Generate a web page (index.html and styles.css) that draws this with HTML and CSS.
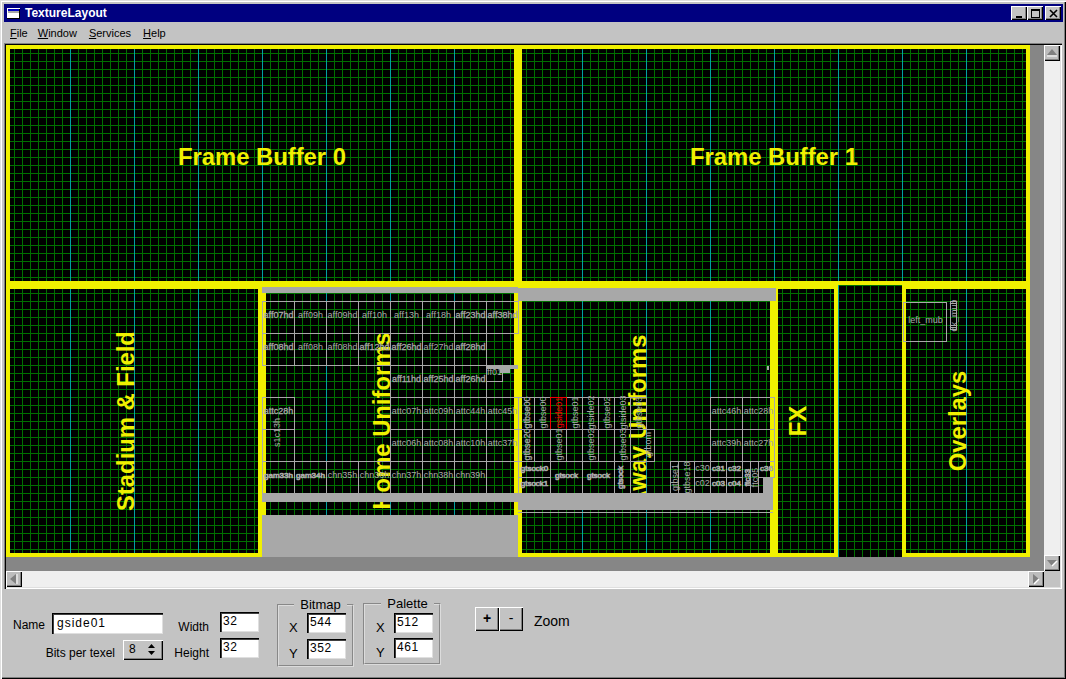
FILE: index.html
```html
<!DOCTYPE html>
<html lang="en">
<head>
    <meta charset="UTF-8">
    <title>TextureLayout</title>
    <link rel="stylesheet" href="styles.css">
</head>
<body>
<div class="window">
    <div class="titlebar">
        <svg class="appicon" width="13" height="11" viewBox="0 0 13 11">
            <rect x="0" y="0" width="13" height="11" fill="#fff"/>
            <rect x="1" y="1" width="11" height="2" fill="#0000c0"/>
            <rect x="1" y="3" width="11" height="2" fill="#a8a8a8"/>
            <rect x="0" y="10" width="13" height="1" fill="#000"/>
            <rect x="12" y="1" width="1" height="10" fill="#000"/>
        </svg>
        <span class="title">TextureLayout</span>
        <div class="winbtns">
            <button class="winbtn"><svg width="9" height="9" viewBox="0 0 9 9"><rect x="1" y="7" width="6" height="2"/></svg></button>
            <button class="winbtn"><svg width="9" height="9" viewBox="0 0 9 9"><path d="M0 0h9v9H0zM1 2v6h7V2z" fill-rule="evenodd"/></svg></button>
            <button class="winbtn winbtn-close"><svg width="9" height="9" viewBox="0 0 9 9"><path d="M1 1l7 7M8 1L1 8" stroke="#000" stroke-width="1.6"/></svg></button>
        </div>
    </div>

    <div class="menubar">
        <span class="menu-file"><u>F</u>ile</span>
        <span><u>W</u>indow</span>
        <span><u>S</u>ervices</span>
        <span><u>H</u>elp</span>
    </div>

    <div class="viewport">
        <div class="canvas">
            <svg class="sheet" width="1024" height="512" viewBox="6 45 1024 512">
                <!-- regions -->
                <rect class="region" x="8" y="47" width="508" height="236"/>
                <rect class="region" x="520" y="47" width="508" height="236"/>
                <rect class="region" x="8" y="287" width="252" height="268"/>
                <rect class="region" x="264" y="287" width="252" height="268"/>
                <rect class="region" x="520" y="287" width="252" height="268"/>
                <rect class="region" x="776" y="287" width="60" height="268"/>
                <rect class="region" x="904" y="287" width="124" height="268"/>

                <text class="region-name" x="262" y="165">Frame Buffer 0</text>
                <text class="region-name" x="774" y="165">Frame Buffer 1</text>
                <text class="region-name" x="134" y="421" transform="rotate(-90 134 421)">Stadium &amp; Field</text>
                <text class="region-name" x="390" y="421" transform="rotate(-90 390 421)">Home Uniforms</text>
                <text class="region-name" x="646" y="421" transform="rotate(-90 646 421)">Away Uniforms</text>
                <text class="region-name" x="806" y="421" transform="rotate(-90 806 421)">FX</text>
                <text class="region-name" x="966" y="421" transform="rotate(-90 966 421)">Overlays</text>

                <!-- used up areas -->
                <rect class="used" x="262" y="287" width="256" height="6"/>
                <rect class="used" x="518" y="288" width="258" height="13"/>
                <rect class="used" x="262" y="493" width="256" height="9"/>
                <rect class="used" x="518" y="493" width="255" height="17"/>
                <rect class="used" x="262" y="515" width="256" height="42"/>
                <rect class="used" x="518" y="512" width="255" height="1"/>
                <rect class="used" x="486" y="365" width="32" height="4"/>
                <rect class="used" x="500" y="369" width="10" height="4"/>
                <rect class="used" x="763" y="477" width="10" height="16"/>
                <rect class="used" x="767" y="366" width="2" height="4"/>

                <g class="textures" transform="translate(.5 .5)">
                    <!-- home: row 301 -->
                    <rect x="262" y="301" width="32" height="32"/><text class="blur" x="278" y="317">aff07hd</text>
                    <rect x="294" y="301" width="32" height="32"/><text x="310" y="317">aff09h</text>
                    <rect x="326" y="301" width="32" height="32"/><text x="342" y="317">aff09hd</text>
                    <rect x="358" y="301" width="32" height="32"/><text x="374" y="317">aff10h</text>
                    <rect x="390" y="301" width="32" height="32"/><text x="406" y="317">aff13h</text>
                    <rect x="422" y="301" width="32" height="32"/><text x="438" y="317">aff18h</text>
                    <rect x="454" y="301" width="32" height="32"/><text class="blur" x="470" y="317">aff23hd</text>
                    <rect x="486" y="301" width="32" height="32"/><text class="blur" x="502" y="317">aff38hd</text>
                    <!-- home: row 333 -->
                    <rect x="262" y="333" width="32" height="32"/><text class="blur" x="278" y="349">aff08hd</text>
                    <rect x="294" y="333" width="32" height="32"/><text x="310" y="349">aff08h</text>
                    <rect x="326" y="333" width="32" height="32"/><text x="342" y="349">aff08hd</text>
                    <rect x="358" y="333" width="32" height="32"/><text class="blur" x="374" y="349">aff12hd</text>
                    <rect x="390" y="333" width="32" height="32"/><text class="blur" x="406" y="349">aff26hd</text>
                    <rect x="422" y="333" width="32" height="32"/><text x="438" y="349">aff27hd</text>
                    <rect x="454" y="333" width="32" height="32"/><text class="blur" x="470" y="349">aff28hd</text>
                    <!-- home: row 365 -->
                    <rect x="390" y="365" width="32" height="32"/><text class="blur" x="406" y="381">aff11hd</text>
                    <rect x="422" y="365" width="32" height="32"/><text class="blur" x="438" y="381">aff25hd</text>
                    <rect x="454" y="365" width="32" height="32"/><text class="blur" x="470" y="381">aff26hd</text>
                    <rect x="486" y="365" width="16" height="16"/><text x="494" y="374">ff01</text>
                    <!-- home: rows 397, 429 -->
                    <rect x="262" y="397" width="32" height="32"/><text class="blur" x="278" y="413">attc28h</text>
                    <rect x="262" y="429" width="32" height="32"/><text x="279" y="432" transform="rotate(-90 279 432)">s1c13h</text>
                    <rect x="390" y="397" width="32" height="32"/><text x="406" y="413">attc07h</text>
                    <rect x="422" y="397" width="32" height="32"/><text x="438" y="413">attc09h</text>
                    <rect x="454" y="397" width="32" height="32"/><text x="470" y="413">attc44h</text>
                    <rect x="486" y="397" width="32" height="32"/><text x="502" y="413">attc45h</text>
                    <rect x="390" y="429" width="32" height="32"/><text x="406" y="445">attc06h</text>
                    <rect x="422" y="429" width="32" height="32"/><text x="438" y="445">attc08h</text>
                    <rect x="454" y="429" width="32" height="32"/><text x="470" y="445">attc10h</text>
                    <rect x="486" y="429" width="32" height="32"/><text x="502" y="445">attc37h</text>
                    <!-- home: row 461 -->
                    <rect x="262" y="461" width="32" height="32"/><text class="blob" x="278" y="477">gam33h</text>
                    <rect x="294" y="461" width="32" height="32"/><text class="blob" x="310" y="477">gam34h</text>
                    <rect x="326" y="461" width="32" height="32"/><text x="342" y="477">chn35h</text>
                    <rect x="358" y="461" width="32" height="32"/><text x="374" y="477">chn36h</text>
                    <rect x="390" y="461" width="32" height="32"/><text x="406" y="477">chn37h</text>
                    <rect x="422" y="461" width="32" height="32"/><text x="438" y="477">chn38h</text>
                    <rect x="454" y="461" width="32" height="32"/><text x="470" y="477">chn39h</text>

                    <!-- away: row 397 -->
                    <rect x="518" y="397" width="16" height="32"/><text class="blur" x="529" y="412" transform="rotate(-90 529 412)">gtbse00</text>
                    <rect x="534" y="397" width="16" height="32"/><text x="545" y="412" transform="rotate(-90 545 412)">gtbse00</text>
                    <rect x="566" y="397" width="16" height="32"/><text x="577" y="412" transform="rotate(-90 577 412)">gtbse01</text>
                    <rect x="582" y="397" width="16" height="32"/><text x="593" y="412" transform="rotate(-90 593 412)">gtside02</text>
                    <rect x="598" y="397" width="16" height="32"/><text x="609" y="412" transform="rotate(-90 609 412)">gtbse02</text>
                    <rect x="614" y="397" width="16" height="32"/><text x="625" y="412" transform="rotate(-90 625 412)">gtside03</text>
                    <rect x="630" y="397" width="16" height="32"/><text x="641" y="412" transform="rotate(-90 641 412)">gtbse03</text>
                    <rect class="selected" x="550" y="397" width="16" height="32"/><text class="selected-label" x="561" y="412" transform="rotate(-90 561 412)">gside01</text>
                    <!-- away: row 429 -->
                    <rect x="518" y="429" width="16" height="32"/><text class="blur" x="529" y="444" transform="rotate(-90 529 444)">gtbse20</text>
                    <rect x="550" y="429" width="16" height="32"/><text x="561" y="444" transform="rotate(-90 561 444)">gtbse01</text>
                    <rect x="582" y="429" width="16" height="32"/><text x="593" y="444" transform="rotate(-90 593 444)">gtbse02</text>
                    <rect x="614" y="429" width="16" height="32"/><text x="625" y="444" transform="rotate(-90 625 444)">gtbse03</text>
                    <rect x="630" y="429" width="24" height="32"/><text x="650" y="444" transform="rotate(-90 650 444)">gtbom</text>
                    <!-- away: row 461 -->
                    <rect x="518" y="461" width="32" height="16"/><text class="blob" x="534" y="470">gtsock0</text>
                    <rect x="518" y="477" width="32" height="16"/><text class="blob" x="534" y="485">gtsock1</text>
                    <rect x="550" y="461" width="32" height="32"/><text class="blob" x="566" y="477">gtsock</text>
                    <rect x="582" y="461" width="32" height="32"/><text class="blob" x="598" y="477">gtsock</text>
                    <rect x="614" y="461" width="16" height="32"/><text class="blob" x="622" y="477" transform="rotate(-90 622 477)">gtsock</text>
                    <rect x="670" y="461" width="8" height="32"/><text x="677" y="477" transform="rotate(-90 677 477)">gtbse1</text>
                    <rect x="678" y="461" width="16" height="32"/><text x="689" y="477" transform="rotate(-90 689 477)">gtbse18</text>
                    <rect x="694" y="461" width="16" height="16"/><text x="702" y="470">c30</text>
                    <rect x="694" y="477" width="16" height="16"/><text x="702" y="485">c02</text>
                    <rect x="710" y="461" width="16" height="16"/><text class="blob" x="718" y="470">c31</text>
                    <rect x="710" y="477" width="16" height="16"/><text class="blob" x="718" y="485">c03</text>
                    <rect x="726" y="461" width="16" height="16"/><text class="blob" x="734" y="470">c32</text>
                    <rect x="726" y="477" width="16" height="16"/><text class="blob" x="734" y="485">c04</text>
                    <rect x="742" y="461" width="8" height="32"/><text class="blob" x="749" y="477" transform="rotate(-90 749 477)">ftc33</text>
                    <rect x="750" y="461" width="8" height="32"/><text x="757" y="477" transform="rotate(-90 757 477)">ftc05</text>
                    <rect x="758" y="461" width="16" height="16"/><text class="blob" x="766" y="470">c36</text>
                    <!-- away: right block -->
                    <rect x="710" y="397" width="32" height="32"/><text x="726" y="413">attc46h</text>
                    <rect x="742" y="397" width="32" height="32"/><text x="758" y="413">attc28h</text>
                    <rect x="710" y="429" width="32" height="32"/><text x="726" y="445">attc39h</text>
                    <rect x="742" y="429" width="32" height="32"/><text x="758" y="445">attc27h</text>

                    <!-- overlays -->
                    <rect x="903" y="302" width="43" height="39"/><text x="925" y="322">left_mub</text>
                    <rect x="950" y="301" width="6" height="28"/><text x="956" y="315" transform="rotate(-90 956 315)">dk_mub</text>
                </g>
            </svg>
        </div>
        <div class="scroll-v">
            <button class="arrow"><svg width="12" height="8" viewBox="0 0 12 8"><path d="M6 0l5 6H1z" fill="#808080"/><path d="M1 7h10" stroke="#fff"/></svg></button>
            <div class="track"></div>
            <button class="arrow"><svg width="12" height="8" viewBox="0 0 12 8"><path d="M1 1h10L6 7z" fill="#808080"/><path d="M6 7l5-5" stroke="#fff" stroke-width="1.4"/></svg></button>
        </div>
        <div class="scroll-h">
            <button class="arrow"><svg width="8" height="12" viewBox="0 0 8 12"><path d="M0 6l6-5v10z" fill="#808080"/><path d="M7 1v10" stroke="#fff"/></svg></button>
            <div class="track"></div>
            <button class="arrow"><svg width="8" height="12" viewBox="0 0 8 12"><path d="M1 1l6 5-6 5z" fill="#808080"/><path d="M2 11l5-5" stroke="#fff" stroke-width="1.4"/></svg></button>
        </div>
        <div class="scroll-corner"></div>
    </div>

    <div class="panel">
        <div class="fields fields-name">
            <div class="row">
                <label for="name">Name</label>
                <input class="field field-name" type="text" id="name" value="gside01">
            </div>
            <div class="row">
                <label>Bits per texel</label>
                <div class="spin"><span>8</span>
                    <svg width="7" height="11" viewBox="0 0 7 11"><path d="M3.5 0L7 4H0zM0 7h7l-3.5 4z"/></svg>
                </div>
            </div>
        </div>
        <div class="fields fields-size">
            <div class="row"><label for="width">Width</label><input class="field" type="text" id="width" value="32"></div>
            <div class="row"><label for="height">Height</label><input class="field" type="text" id="height" value="32"></div>
        </div>
        <fieldset class="group group-bitmap">
            <legend>Bitmap</legend>
            <div class="row"><label>X</label><input class="field" type="text" value="544"></div>
            <div class="row"><label>Y</label><input class="field" type="text" value="352"></div>
        </fieldset>
        <fieldset class="group group-palette">
            <legend>Palette</legend>
            <div class="row"><label>X</label><input class="field" type="text" value="512"></div>
            <div class="row"><label>Y</label><input class="field" type="text" value="461"></div>
        </fieldset>
        <div class="zoombox">
            <button class="zoombtn zoombtn-plus">+</button>
            <button class="zoombtn">-</button>
            <span class="zoomlabel">Zoom</span>
        </div>
    </div>
</div>
</body>
</html>
```

FILE: styles.css
```css
* {
    box-sizing: border-box;
}
body {
    margin: 0;
    font-family: "Liberation Sans", Arial, sans-serif;
    font-size: 12px;
    color: #000;
    background-color: #c3c3c3;
}
button {
    padding: 0;
    font-family: inherit;
    background-color: #c3c3c3;
    border: 0;
    box-shadow: inset 1px 1px 0 #fff, inset -1px -1px 0 #000, inset -2px -2px 0 #808080;
}
.window {
    width: 1066px;
    height: 679px;
    padding: 4px 3px 2px 4px;
    display: flex;
    flex-direction: column;
    background-color: #c3c3c3;
    box-shadow: inset 1px 1px 0 #dfdfdf, inset 2px 2px 0 #fff, inset -1px -1px 0 #000, inset -2px -2px 0 #808080;
}

/* title bar */
.titlebar {
    height: 18px;
    flex: none;
    display: flex;
    align-items: center;
    padding: 0 2px 0 3px;
    background-color: #000080;
}
.appicon {
    margin-right: 5px;
}
.title {
    color: #fff;
    font-size: 12px;
    font-weight: bold;
}
.winbtns {
    margin-left: auto;
    display: flex;
}
.winbtn {
    width: 16px;
    height: 14px;
    display: flex;
    align-items: center;
    justify-content: center;
}
.winbtn-close {
    margin-left: 2px;
}

/* menu */
.menubar {
    height: 21px;
    flex: none;
    display: flex;
    align-items: center;
    gap: 12px;
    padding-left: 6px;
    font-size: 11px;
}
.menu-file {
    margin-right: -2px;
}

/* canvas and scrollbars */
.viewport {
    width: 1058px;
    height: 546px;
    flex: none;
    display: grid;
    grid-template-columns: 1038px 16px;
    grid-template-rows: 526px 16px;
    padding: 2px;
    box-shadow: inset 1px 1px 0 #808080, inset 2px 2px 0 #000, inset -1px -1px 0 #fff, inset -2px -2px 0 #dfdfdf;
}
.canvas {
    background-color: #868686;
}
.sheet {
    display: block;
    background:
        linear-gradient(to right, #00a0a0 1px, transparent 1px) 0 0 / 64px 100%,
        linear-gradient(to right, #007000 1px, transparent 1px) 0 0 / 8px 100%,
        linear-gradient(#007000 1px, transparent 1px) 0 0 / 100% 8px,
        #000;
}
.region {
    fill: none;
    stroke: #f0f000;
    stroke-width: 4;
}
.region-name {
    fill: #f0f000;
    font-size: 23.8px;
    font-weight: bold;
    text-anchor: middle;
}
.used {
    fill: #a8a8a8;
}
.textures rect {
    fill: none;
    stroke: #a8a8a8;
    shape-rendering: crispEdges;
}
.textures text {
    fill: #a8a8a8;
    font-size: 9px;
    text-anchor: middle;
}
.textures .blur {
    stroke: #a8a8a8;
    stroke-width: .3;
}
.textures .blob {
    font-size: 8px;
    stroke: #a8a8a8;
    stroke-width: .7;
}
.textures .selected {
    stroke: #f00000;
}
.textures .selected-label {
    fill: #f00000;
}
.scroll-v, .scroll-h {
    display: flex;
}
.scroll-v {
    flex-direction: column;
}
.track {
    flex: 1;
    background-color: #efefef;
}
.arrow {
    width: 16px;
    height: 16px;
    flex: none;
    display: flex;
    align-items: center;
    justify-content: center;
    background-color: #bdbdbd;
}
.scroll-corner {
    background-color: #c3c3c3;
}

/* form panel */
.panel {
    flex: 1;
    display: flex;
    align-items: flex-start;
    padding-left: 9px;
}
.fields {
    display: flex;
    flex-direction: column;
    align-items: flex-end;
    gap: 4px;
}
.row {
    display: flex;
}
.fields-name {
    width: 150px;
    margin-top: 24px;
}
.fields-name label {
    margin-right: 7px;
    padding-top: 2px;
    line-height: 21px;
}
.fields-name .row:last-child label {
    margin-right: 8px;
    padding-top: 3px;
}
.fields-size {
    width: 86px;
    margin-top: 23px;
    margin-left: 10px;
}
.fields-size label {
    margin-right: 11px;
    padding-top: 8px;
    line-height: 14px;
}
.field {
    width: 39px;
    height: 20px;
    padding: 0 0 2px 3px;
    font-family: "Liberation Sans", Arial, sans-serif;
    font-size: 12px;
    letter-spacing: .6px;
    color: #000;
    background-color: #fff;
    border: 0;
    border-radius: 0;
    outline: none;
    box-shadow: inset 1px 1px 0 #000, inset 2px 2px 0 #404040, inset -1px -1px 0 #dfdfdf;
}
.field-name {
    width: 111px;
    height: 21px;
    padding-left: 5px;
    letter-spacing: 1px;
}
.spin {
    width: 40px;
    height: 20px;
    display: flex;
    align-items: center;
    justify-content: space-between;
    padding: 0 8px 2px 6px;
    box-shadow: inset 1px 1px 0 #fff, inset -1px -1px 0 #000, inset -2px -2px 0 #808080;
}
.group {
    margin: 8px 0 0 18px;
    padding: 0 0 0 10px;
    width: 77px;
    height: 70px;
    border: 2px groove #dcdcdc;
}
.group legend {
    margin: 0 auto;
    padding: 0 6px;
    font-size: 13px;
    line-height: 15px;
}
.group .row {
    height: 20px;
}
.group label {
    width: 18px;
    padding-top: 5px;
    line-height: 20px;
    font-size: 13px;
}
.group .row + .row {
    margin-top: 6px;
}
.group-bitmap .row:first-of-type {
    margin-top: 1px;
}
.group-palette {
    width: 78px;
    height: 69px;
    margin: 7px 0 0 9px;
    padding-left: 11px;
}
.group-palette .row + .row {
    margin-top: 5px;
}
.group-palette .row:first-of-type {
    margin-top: 2px;
}
.zoombox {
    display: flex;
    align-items: center;
    margin: 18px 0 0 34px;
}
.zoombtn {
    width: 24px;
    height: 24px;
    font-size: 14px;
    line-height: 20px;
    padding-bottom: 2px;
}
.zoombtn-plus {
    font-weight: bold;
}
.zoomlabel {
    margin: 4px 0 0 11px;
    font-size: 14px;
}
```
